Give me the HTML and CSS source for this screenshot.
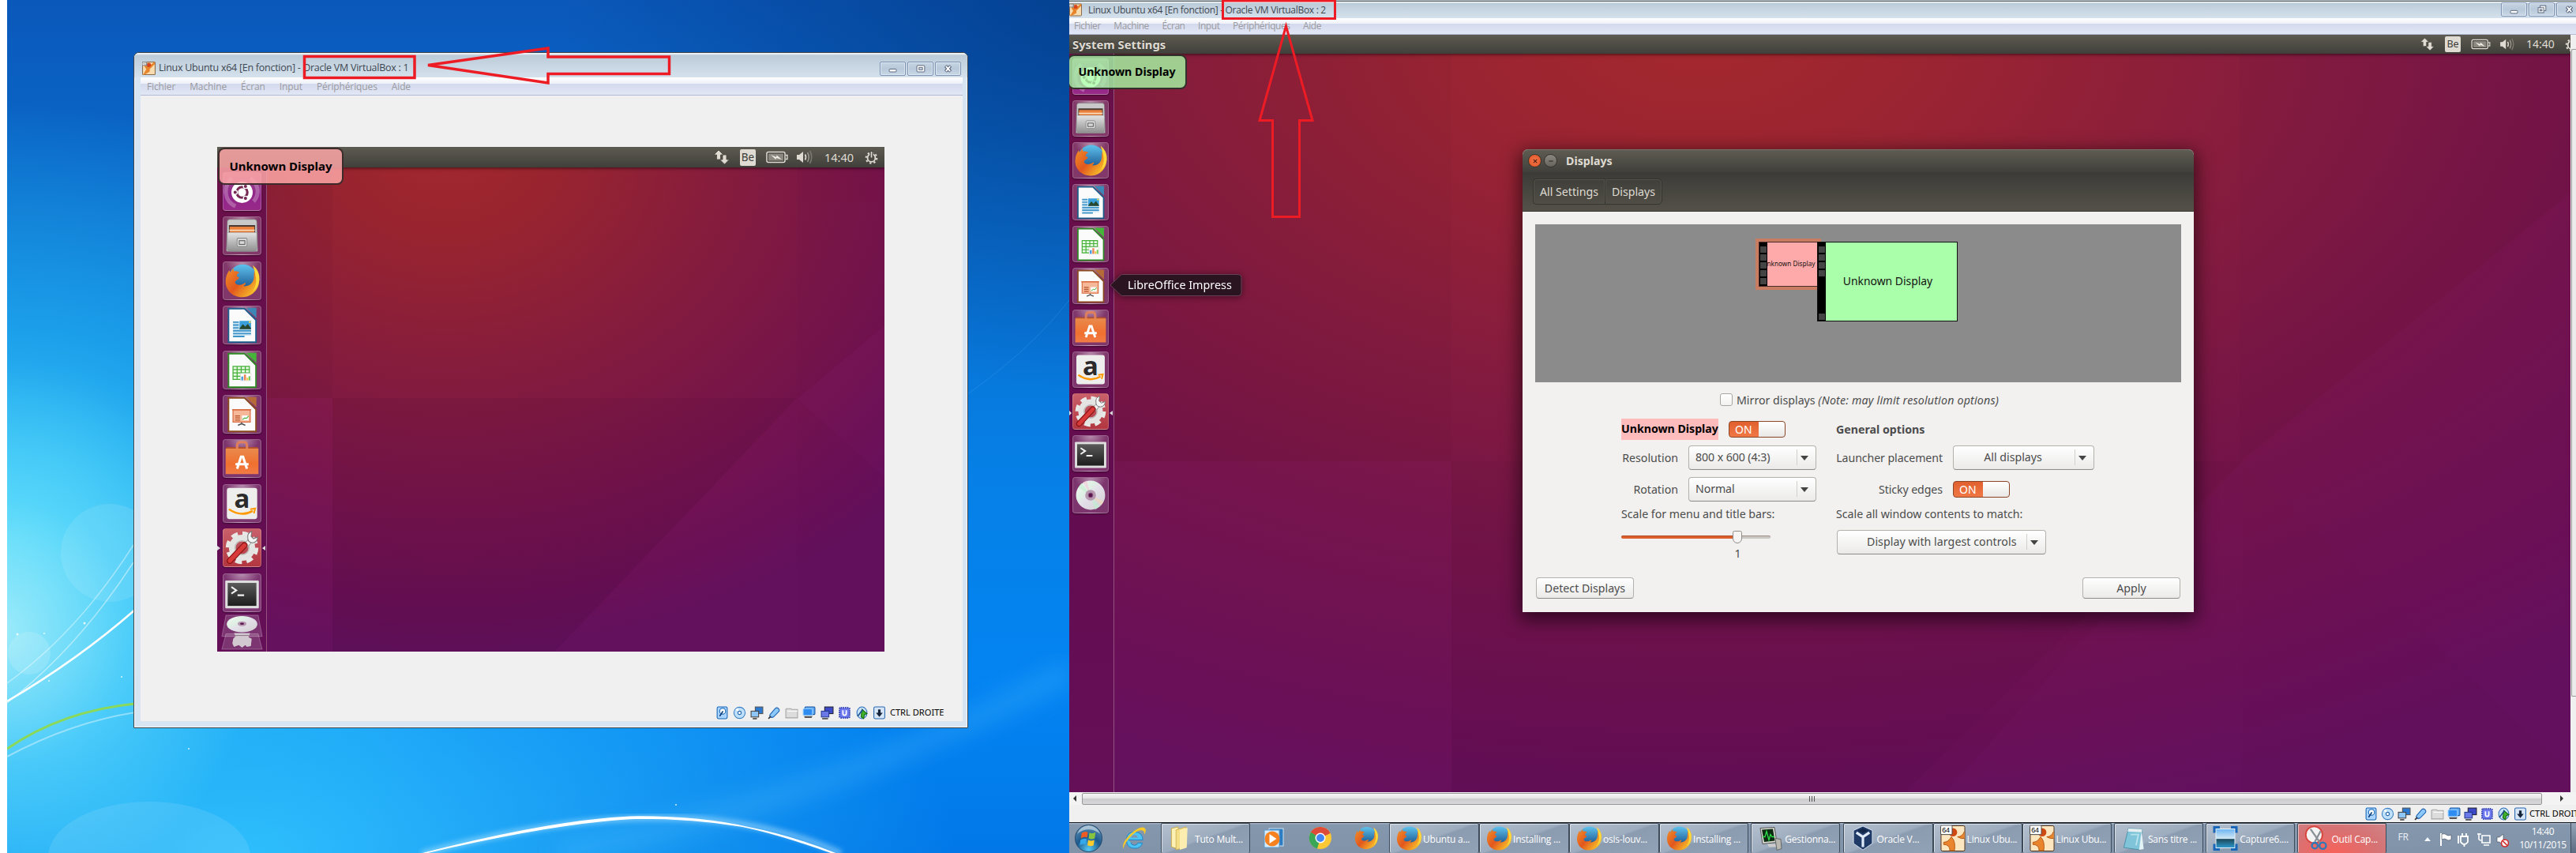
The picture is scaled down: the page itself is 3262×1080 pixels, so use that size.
FILE: index.html
```html
<!DOCTYPE html>
<html lang="fr">
<head>
<meta charset="utf-8">
<title>Linux Ubuntu x64 - Oracle VM VirtualBox</title>
<link rel="stylesheet" href="styles.css">
</head>
<body>
<svg class="defs" aria-hidden="true">
  <defs>
    <linearGradient id="gGrey" x1="0" y1="0" x2="0" y2="1"><stop offset="0" stop-color="#e4e4e4"/><stop offset="1" stop-color="#8f8f8f"/></linearGradient>
    <linearGradient id="gBlue" x1="0" y1="0" x2="0" y2="1"><stop offset="0" stop-color="#5fc3ee"/><stop offset="1" stop-color="#0c3f7c"/></linearGradient>
    <linearGradient id="gFox" x1="0" y1="0" x2="1" y2="0.7"><stop offset="0" stop-color="#f0902a"/><stop offset="0.5" stop-color="#e2571d"/><stop offset="1" stop-color="#f9c52c"/></linearGradient>
    <linearGradient id="gBag" x1="0" y1="0" x2="0" y2="1"><stop offset="0" stop-color="#e98a4c"/><stop offset="0.6" stop-color="#f0702f"/><stop offset="1" stop-color="#f07c45"/></linearGradient>
    <linearGradient id="gTerm" x1="0" y1="0" x2="0" y2="1"><stop offset="0" stop-color="#5a5a5a"/><stop offset="1" stop-color="#1d1d1d"/></linearGradient>
    <linearGradient id="gDisc" x1="0" y1="0" x2="1" y2="1"><stop offset="0" stop-color="#f6f6f6"/><stop offset="0.35" stop-color="#dff0e4"/><stop offset="0.5" stop-color="#e4e0ea"/><stop offset="1" stop-color="#cfcfcf"/></linearGradient>
    <radialGradient id="gOrb" cx="0.5" cy="0.9" r="0.9"><stop offset="0" stop-color="#56c8f2"/><stop offset="0.5" stop-color="#1c5b8f"/><stop offset="1" stop-color="#5c8db2"/></radialGradient>
    <linearGradient id="gCap" x1="0" y1="0" x2="0" y2="1"><stop offset="0" stop-color="#6ab4f2"/><stop offset="0.5" stop-color="#cfe6f4"/><stop offset="0.55" stop-color="#1c4a5c"/><stop offset="1" stop-color="#2e9bd0"/></linearGradient>
  </defs>

  <symbol id="i-ubuntu" viewBox="0 0 48 48">
    <path d="M12 8a20 20 0 0 0 4 34M38 36a18 18 0 0 0-4-28" fill="none" stroke="#fff" stroke-opacity=".25" stroke-width="5"/>
    <circle cx="24" cy="25" r="13" fill="#fff"/>
    <circle cx="24" cy="25" r="6.5" fill="none" stroke="#772953" stroke-width="3"/>
    <g fill="#772953" stroke="#fff" stroke-width="1.2"><circle cx="15.6" cy="25" r="2.6"/><circle cx="28.2" cy="17.7" r="2.6"/><circle cx="28.2" cy="32.3" r="2.6"/></g>
  </symbol>
  <symbol id="i-files" viewBox="0 0 48 48">
    <path d="M6 7q0-3 3-3h30q3 0 3 3l1 35q0 1-1 1H6q-1 0-1-1z" fill="#c9c9c9" stroke="#777" stroke-width=".6"/>
    <path d="M8 11h32v10H8z" fill="#4b3a33"/>
    <path d="M9 13h30v8H9z" fill="#e9803c"/><path d="M8.500 16.500h31v1.500h-31z" fill="#fbe3c8"/>
    <path d="M6 20h36v20q0 3-3 3H9q-3 0-3-3z" fill="url(#gGrey)" stroke="#8a8a8a" stroke-width=".5"/>
    <rect x="18" y="27" width="12" height="10" rx="1.500" fill="#e0e0e0" stroke="#8a8a8a"/><rect x="20.500" y="30" width="7" height="4.500" fill="#d8d8d8" stroke="#555"/>
  </symbol>
  <symbol id="i-firefox" viewBox="0 0 48 48">
    <circle cx="25" cy="22" r="18" fill="url(#gBlue)"/>
    <path d="M41 9q6 8 3.500 19C42 38 33 44 24 44 12 44 3.500 35 4 24c.2-6 2.500-10 4.500-13l1 3 4-5.500.5 4c3-1 5 0 7 1.500-2 1-3.500 2-3.500 4.500l3 1.500c0 3-5 3-5 6 1 4 8 4 12 .5 2 .5 0 3-2 4 7 1 13-4 13-11 0-4 0-7 2.500-10.500z" fill="url(#gFox)"/>
    <path d="M37 5q9 7 8 18-1 9-8 14 5-8 4-16-1-8-4-16z" fill="#fbd93a"/>
  </symbol>
  <symbol id="i-writer" viewBox="0 0 48 48">
    <path d="M7.500 4H27l14 14v27H7.500z" fill="#fbfbfb" stroke="#1d5f8c" stroke-width="1.800"/>
    <path d="M29 3h12.500v12.500z" fill="#3c87b5"/>
    <path d="M13 20h22v17H13z" fill="#d3e8f5"/>
    <path d="M13 20.500h7M13 24h7M13 27.500h7M13 31h22M13 34.500h22M13 38h14" stroke="#3e93c8" stroke-width="1.800"/>
    <path d="M21 19h14v10H21z" fill="#3aa0dc"/><path d="M21 28l4-5 3 3 3-3.500 4 5.500v1H21z" fill="#27472e"/><circle cx="33.500" cy="20.500" r="1.200" fill="#f6e04b"/>
  </symbol>
  <symbol id="i-calc" viewBox="0 0 48 48">
    <path d="M7.500 4H27l14 14v27H7.500z" fill="#fbfbfb" stroke="#2d8a24" stroke-width="1.800"/>
    <path d="M29 3h12.500v12.500z" fill="#45b53a"/>
    <path d="M13 19.500h20v16H13zM13 23.500h20M13 27.500h20M13 31.500h20M18 19.500v16M23 19.500v16M28 19.500v16" fill="#e8f8e5" stroke="#43b036" stroke-width="1.200"/>
    <path d="M22 28h13v9H22z" fill="#fff" stroke="#ccc" stroke-width=".5"/><path d="M23 32h2.500v4.500H23z" fill="#4b9ee0"/><path d="M26.300 29.500h2.500v7h-2.500z" fill="#e98557"/><path d="M29.500 33.500h2v3h-2z" fill="#f0c830"/><path d="M32 31.500h2v5h-2z" fill="#6cc95a"/>
  </symbol>
  <symbol id="i-impress" viewBox="0 0 48 48">
    <path d="M7.500 4H27l14 14v27H7.500z" fill="#fbfbfb" stroke="#8a4a1e" stroke-width="1.800"/>
    <path d="M29 3h12.500v12.500z" fill="#b56a38"/>
    <path d="M13 18.500h21v15H13z" fill="#f7b899" stroke="#d96c40" stroke-width="1.200"/><path d="M12 18.500h23" stroke="#d96c40" stroke-width="1.500"/>
    <path d="M15.500 26h6M15.500 28.500h6M15.500 31h6" stroke="#b5522a" stroke-width="1.200"/><path d="M24 25.500h8v6h-8z" fill="#fff"/><path d="M24.500 30.500l3-2 2 .5 2.500-3" fill="none" stroke="#43b036"/>
    <path d="M23.500 34v2M19 37.500l4.500-2 4.500 2" fill="none" stroke="#555" stroke-width="1.500"/>
  </symbol>
  <symbol id="i-bag" viewBox="0 0 48 48">
    <path d="M5 10h38l1 3H4z" fill="#b5502c"/>
    <path d="M18 15V8q0-4 4-4h4q4 0 4 4v7" fill="none" stroke="#e07f5c" stroke-width="3"/>
    <path d="M4 12h40v31H4z" fill="url(#gBag)"/>
    <path d="M18 36.500L22.800 22h2.400L30 36.500M16 31h16" fill="none" stroke="#fff" stroke-width="3"/>
  </symbol>
  <symbol id="i-amazon" viewBox="0 0 48 48">
    <rect x="5.500" y="5" width="37" height="38" rx="3" fill="#eeeeec"/>
    <path d="M8 31q15 10 29 2" fill="none" stroke="#f90" stroke-width="2.400"/><path d="M34 31l6-1-1.500 6" fill="none" stroke="#f90" stroke-width="2"/>
  </symbol>
  <symbol id="i-settings" viewBox="0 0 48 48">
    <circle cx="24" cy="24" r="17.500" fill="none" stroke="#e8e8e6" stroke-width="5" stroke-dasharray="8 5.740" />
    <circle cx="24" cy="24" r="12" fill="none" stroke="#e4e4e2" stroke-width="8"/>
    <circle cx="24" cy="24" r="8.500" fill="none" stroke="#b9b9b7" stroke-width="1.500"/>
    <path d="M28 22l8-9" stroke="#8a8a8a" stroke-width="6"/><path d="M28 22l8-9" stroke="#f4f4f4" stroke-width="4.500"/>
    <path d="M31 12q-1-6 5-8l-1 6 3 3 5-2q0 6-6 7-6 0-6-6z" fill="#f4f4f4" stroke="#777" stroke-width="1"/>
    <path d="M9 40L27 21" stroke="#8d1515" stroke-width="7.500" stroke-linecap="round"/><path d="M9 40L27 21" stroke="#d83a3a" stroke-width="5" stroke-linecap="round"/>
  </symbol>
  <symbol id="i-terminal" viewBox="0 0 48 48">
    <rect x="3.500" y="9" width="41" height="34" rx="1" fill="#dedede"/><rect x="6.500" y="12" width="35" height="28" fill="url(#gTerm)"/>
    <path d="M11 17l6 4-6 4M18.500 27h8" fill="none" stroke="#f2f2f2" stroke-width="2"/>
  </symbol>
  <symbol id="i-disc" viewBox="0 0 48 48">
    <circle cx="24" cy="24" r="19" fill="url(#gDisc)"/>
    <path d="M24 24L8 14l4-6z" fill="#bff0cf" opacity=".6"/><path d="M24 24L36 39l-6 4z" fill="#bdf0cf" opacity=".6"/><path d="M24 24l17 8-3 5z" fill="#f4d5b5" opacity=".6"/><path d="M24 24L14 7l5-2z" fill="#f4c8d8" opacity=".6"/>
    <circle cx="24" cy="24" r="7" fill="#b79ab0"/><circle cx="24" cy="24" r="3" fill="#5a1450" stroke="#8a5a80"/>
  </symbol>
  <symbol id="i-folded" viewBox="0 0 52 44" preserveAspectRatio="none">
    <path d="M6 1h40l5 26H1z" fill="#fff" fill-opacity=".16" stroke="#fff" stroke-opacity=".25"/>
    <path d="M6 24h40l5 19H1z" fill="#fff" fill-opacity=".16" stroke="#fff" stroke-opacity=".25"/>
    <ellipse cx="26" cy="12" rx="19" ry="10" fill="url(#gDisc)"/><ellipse cx="26" cy="11.500" rx="5.500" ry="3" fill="#b79ab0"/><ellipse cx="26" cy="11.500" rx="2.500" ry="1.300" fill="#5a1450"/>
    <path d="M16 23h20l-2 5 4 2-1 9-5 1-2-2-4 3-4-3-6 2-2-4 1-6 3-3z" fill="#d2c8d0"/><path d="M17 26h18" stroke="#8d7388"/>
  </symbol>

  <symbol id="t-net" viewBox="0 0 20 18"><path d="M6 0l6 6H8.500v6h-5V6H0z M13.500 18l-6-6H11V6h5v6h3.500z" fill="#dfdbd2" stroke="#4a483f" stroke-width=".8"/></symbol>
  <symbol id="t-bat" viewBox="0 0 28 16"><rect x="1" y="1.500" width="23" height="13" rx="2" fill="#3e3d38" stroke="#dfdbd2" stroke-width="1.500"/><path d="M25 5.500h2v5h-2" fill="none" stroke="#dfdbd2" stroke-width="1.300"/><rect x="3" y="3.500" width="19" height="9" fill="#8b897f"/><path d="M6 5l7 3 .5-2.500L20 11l-7-2-.5 2z" fill="#f1efe8"/></symbol>
  <symbol id="t-vol" viewBox="0 0 22 18"><path d="M1 6h3l5-4v14l-5-4H1z" fill="#dfdbd2"/><path d="M11.500 5.500q2 3.500 0 7" fill="none" stroke="#dfdbd2" stroke-width="1.600"/><path d="M14.500 3q3.500 6 0 12" fill="none" stroke="#97948a" stroke-width="1.600"/><path d="M17.500 1q4.500 8 0 16" fill="none" stroke="#7a776e" stroke-width="1.600"/></symbol>
  <symbol id="t-gear" viewBox="0 0 18 18"><circle cx="9" cy="9.500" r="5.200" fill="none" stroke="#dfdbd2" stroke-width="2"/><circle cx="9" cy="9.500" r="7.200" fill="none" stroke="#dfdbd2" stroke-width="2.200" stroke-dasharray="2.500 3.155"/><path d="M9 0v9" stroke="#45443e" stroke-width="4.500"/><path d="M9 1v8" stroke="#dfdbd2" stroke-width="1.800"/></symbol>

  <symbol id="s-hdd" viewBox="0 0 16 16"><rect x="2" y="1" width="12" height="14" rx="1.500" fill="#a9d4ff" stroke="#1565b5"/><circle cx="8.500" cy="6" r="3.500" fill="#fff" stroke="#1565b5"/><path d="M5 12l4-6" stroke="#123e7a" stroke-width="1.600"/></symbol>
  <symbol id="s-cd" viewBox="0 0 16 16"><circle cx="8" cy="8" r="6.700" fill="#bfe0fb" stroke="#3a7fc4"/><path d="M8 8L3 4l3-2z" fill="#fff"/><circle cx="8" cy="8" r="2" fill="#fff" stroke="#2a6ab0"/></symbol>
  <symbol id="s-net" viewBox="0 0 16 16"><rect x="6" y="1" width="9" height="8" fill="#2a78d0" stroke="#555"/><rect x="1" y="6" width="9" height="7" fill="#8ec6f8" stroke="#444"/><path d="M3 15h5" stroke="#444" stroke-width="1.500"/></symbol>
  <symbol id="s-usb" viewBox="0 0 16 16"><path d="M3 10l6-7q2-2 4 0 2 2 0 4l-6 6q-2 1-4 0-1-2 0-3z" fill="#8cc8fa" stroke="#1d62b0"/><path d="M1 15l3-3" stroke="#333" stroke-width="1.500"/></symbol>
  <symbol id="s-dir" viewBox="0 0 16 16"><path d="M1 4l1-1h5l1 1h7v10H1z" fill="#dcdcdc" stroke="#a5a5a5"/><path d="M3 6h12" stroke="#fff"/></symbol>
  <symbol id="s-scr" viewBox="0 0 16 16"><rect x="3" y="1" width="12" height="9" rx="1" fill="#5da9f5" stroke="#1b56a0"/><rect x="1" y="3" width="11" height="8" rx="1" fill="#2f8cf0" stroke="#9cd0ff"/><path d="M3 14h8l1-2H2z" fill="#555"/></symbol>
  <symbol id="s-rec" viewBox="0 0 16 16"><rect x="5" y="1" width="10" height="8" fill="#3c49c8" stroke="#223"/><rect x="1" y="6" width="9" height="7" fill="#6b78e8" stroke="#223a90"/><path d="M2 15h7" stroke="#444" stroke-width="1.500"/></symbol>
  <symbol id="s-cpu" viewBox="0 0 16 16"><rect x="2" y="2" width="12" height="12" rx="1.500" fill="#6f7cf0" stroke="#3a45b8" stroke-width="2" stroke-dasharray="1.500 1"/><path d="M6 5v4q0 2 2 2t2-2V5" fill="none" stroke="#fff" stroke-width="1.600"/></symbol>
  <symbol id="s-mouse" viewBox="0 0 16 16"><ellipse cx="8" cy="8" rx="6" ry="7" fill="#c6e2fa" stroke="#2c6db8"/><path d="M8 4l6 5-3 1-1 5-3-2z" fill="#43b52c" stroke="#17680f"/><path d="M3 12l6-8" stroke="#1b4e8a" stroke-width="1.500"/></symbol>
  <symbol id="s-host" viewBox="0 0 16 16"><rect x="1.500" y="1" width="13" height="14" rx="1.500" fill="#d6e6f6" stroke="#2866b0"/><path d="M6.500 4h3v4H12l-4 5-4-5h2.500z" fill="#16243a"/></symbol>

  <symbol id="w-vm" viewBox="0 0 16 16"><rect x=".5" y=".5" width="15" height="15" rx="1" fill="#f6dcae" stroke="#8a6a4a"/><path d="M4 0q1 6 5 5l6-5v3L9 9v3l-7 4H1l4-7q-3-3-3-9z" fill="#e8842a"/><circle cx="8" cy="4" r="2.600" fill="#d8441c"/><rect x="0" y="0" width="6" height="5" fill="#8b8b88"/><path d="M1 1.500h2v2H1zM4 1v3" stroke="#fff" stroke-width=".8" fill="none"/></symbol>
  <symbol id="w-vm-l" viewBox="0 0 32 34"><rect x=".5" y=".5" width="31" height="33" rx="2" fill="#fbe6bf" stroke="#4f2f16"/><path d="M14 15q6 6 4 18h-6q0-8-8-8v-3q6 0 10-7zM31 8q-3 7-9 7 5 3 9 2" fill="#e9852c" stroke="#b55912"/><circle cx="16" cy="9" r="5.500" fill="#cf4a12"/><rect x="0" y="0" width="15" height="12" rx="1.500" fill="#fff" stroke="#444"/></symbol>

  <symbol id="b-start" viewBox="0 0 38 38"><circle cx="19" cy="19" r="17.500" fill="url(#gOrb)" stroke="#24496b"/><path d="M4 13Q19 2 34 13 30 3 19 2 8 3 4 13z" fill="#fff" opacity=".5"/><path d="M10 12q4-3 8-1l-1 7q-4-2-8 1z" fill="#ee5a24"/><path d="M20 11.500q4 2 8-.5l-1 8q-4 2-8 0z" fill="#86c440"/><path d="M8.500 21q4-3 8-1l-1 7q-4-2-8 1z" fill="#35a8ea"/><path d="M18.500 21q4 2 8 0l-1 7q-4 2-8 0z" fill="#fccb2c"/></symbol>
  <symbol id="b-ie" viewBox="0 0 34 34"><path d="M9 19h19q0-10-11-10.500Q7 9 6.500 19 7 30 17.500 30q8 0 10-7h-6q-1 3-4.500 3-4 0-4.500-3.500" fill="#4cc3f2" stroke="#1e86c6"/><path d="M12.500 16q1-3.500 4.500-3.500T21.500 16z" fill="#8094ab"/><path d="M3 31Q-1 24 12 11 26-1 31 4q2 3-1 8 0-6-5-5.500Q19 7 10 17 2 27 3 31z" fill="#f7c928"/></symbol>
  <symbol id="b-folder" viewBox="0 0 30 34"><path d="M3 4l9-2v29l-9-3z" fill="#fdf2b4" stroke="#c9a94a"/><path d="M9 6l13-4v26l-13 4z" fill="#f5df86" stroke="#c9a94a" stroke-width=".8"/><path d="M14 6l10-3-1 26-9 3z" fill="#fbeeb0"/></symbol>
  <symbol id="b-wmp" viewBox="0 0 30 30"><rect x="9" y="3" width="18" height="22" fill="#2b7cc0" stroke="#cfe5f6"/><rect x="3" y="5" width="19" height="22" fill="#d9ebf8" stroke="#5b9cd0"/><circle cx="13" cy="16" r="9.500" fill="#f5821e"/><path d="M9.500 10v12l9-6z" fill="#fff"/></symbol>
  <symbol id="b-chrome" viewBox="0 0 30 30"><circle cx="15" cy="15" r="14" fill="#fcc934"/><path d="M15 15L3 7.500A14 14 0 0 1 27.500 9z" fill="#dd4b3a"/><path d="M15 15l-4 13.500A14 14 0 0 1 3 7.500z" fill="#3aa757"/><path d="M15 15L3 7.500 15 4z" fill="#dd4b3a"/><circle cx="15" cy="15" r="6.500" fill="#fff"/><circle cx="15" cy="15" r="5" fill="#4285f4"/></symbol>
  <symbol id="b-perf" viewBox="0 0 32 32"><path d="M3 3l18-1 3 19-18 2z" fill="#d8d8d0" stroke="#555"/><path d="M5 5l14-1 2.500 15L8 20.500z" fill="#0d2a12"/><path d="M6 14h3l2-7 3 11 2-7 2 3h3" fill="none" stroke="#2de04a" stroke-width="1.300"/><path d="M12 23h10l2 4H14z" fill="#ccc"/><path d="M22 16l7 1 1 12-6 2z" fill="#b9b9b2" stroke="#666"/></symbol>
  <symbol id="b-vbox" viewBox="0 0 32 36"><path d="M16 1l13 6v18L16 34 3 25V7z" fill="#1f3a66" stroke="#dfe8f5" stroke-width="1"/><path d="M16 16v14M16 16L7 10M16 16l9-6" stroke="#dfeaf8" stroke-width="3.500" fill="none"/><path d="M9 7l7-3 7 3-7 4z" fill="#132848"/></symbol>
  <symbol id="b-note" viewBox="0 0 32 34"><path d="M9 4l18 1-3 27L3 29z" fill="#7fc4d8" stroke="#4b91a8"/><path d="M9 4l18 1-.5 4L8 8z" fill="#e6eef0"/><path d="M26 7l3 24-6 1z" fill="#e3f3f6"/><path d="M12 12l10 0-3 14" fill="none" stroke="#b5e2ec" stroke-width="2"/></symbol>
  <symbol id="b-capt" viewBox="0 0 32 32"><rect x="4" y="4" width="24" height="24" fill="url(#gCap)" stroke="#e8f3fa"/><path d="M2 9V2h7M23 2h7v7M30 23v7h-7M9 30H2v-7" fill="none" stroke="#1a66b8" stroke-width="3"/></symbol>
  <symbol id="b-snip" viewBox="0 0 34 36"><circle cx="13" cy="13" r="11.500" fill="#f3f3f3" stroke="#d8433c" stroke-width="2"/><path d="M8 5l14 20M22 8L14 23" stroke="#8a9098" stroke-width="2.500"/><circle cx="14" cy="28" r="4" fill="none" stroke="#2d78b8" stroke-width="2.500"/><circle cx="25" cy="28" r="4.500" fill="none" stroke="#2d78b8" stroke-width="2.500"/></symbol>
</svg>

<main class="screens">
  <section class="desktop">
    <svg class="aurora" viewBox="0 0 1345 1080">
      <defs><filter id="soft"><feGaussianBlur stdDeviation="14"/></filter><filter id="glow"><feGaussianBlur stdDeviation="3"/></filter></defs>
      <ellipse cx="180" cy="1085" rx="128" ry="70" fill="#fff" opacity=".1"/>
      <circle cx="130" cy="700" r="62" fill="#fff" opacity=".1"/>
      <circle cx="28" cy="827" r="27" fill="#fff" opacity=".14"/>
      <path d="M700 1080Q1050 1010 1345 850" fill="none" stroke="#5cc8ff" stroke-opacity=".25" stroke-width="26" filter="url(#soft)"/>
      <path d="M1200 510Q1290 450 1345 380" fill="none" stroke="#6ac0ff" stroke-opacity=".2"/>
      <path d="M0 948Q70 900 162 891" fill="none" stroke="#8ad95a" stroke-width="3"/>
      <path d="M0 865Q90 800 160 690" fill="none" stroke="#fff" stroke-opacity=".4" stroke-width="1.500"/>
      <path d="M0 890Q90 820 160 712" fill="none" stroke="#fff" stroke-opacity=".45" stroke-width="1.500"/>
      <path d="M0 888Q90 835 162 772" fill="none" stroke="#fff" stroke-width="2.500"/>
      <path d="M0 958Q80 915 162 902" fill="none" stroke="#fff" stroke-opacity=".4" stroke-width="2"/>
      <path d="M525 1081Q860 990 1056 1081" fill="none" stroke="#bfeaff" stroke-width="8" opacity=".5" filter="url(#glow)"/>
      <path d="M525 1081Q700 1036 800 1034 880 1034 940 1048 1000 1060 1062 1086 980 1056 930 1046 870 1036 800 1036 700 1040 525 1081z" fill="#fff" stroke="#fff" stroke-width="1.500"/>
      <g fill="#fff" opacity=".8"><circle cx="13" cy="803" r="1.500"/><circle cx="98" cy="789" r="1.500"/><circle cx="53" cy="862" r="1"/><circle cx="145" cy="857" r="1"/><circle cx="47" cy="802" r="1"/><circle cx="230" cy="948" r="1"/><circle cx="847" cy="1019" r="1"/></g>
    </svg>

    <article class="window">
      <header class="win-title">
        <svg class="ico"><use href="#w-vm"/></svg>
        <h1>Linux Ubuntu x64 [En fonction] - Oracle VM VirtualBox : 1</h1>
        <div class="win-buttons">
          <span><svg viewBox="0 0 33 18"><rect x="11.500" y="9.500" width="10" height="4" rx="1" fill="#fff" stroke="#4d5a73"/></svg></span>
          <span><svg viewBox="0 0 33 18"><rect x="11.500" y="4.500" width="11" height="9" rx="1" fill="#fff" stroke="#4d5a73"/><rect x="14.500" y="7.500" width="5" height="3" fill="#cfdbe9" stroke="#4d5a73"/></svg></span>
          <span><svg viewBox="0 0 33 18"><path d="M13 5l7 8M20 5l-7 8" stroke="#4d5a73" stroke-width="4.500"/><path d="M13.500 5.500l6 7M19.500 5.500l-6 7" stroke="#fff" stroke-width="2.200"/></svg></span>
        </div>
      </header>
      <nav class="win-menu"><span>Fichier</span><span>Machine</span><span>Écran</span><span>Input</span><span>Périphériques</span><span>Aide</span></nav>
      <div class="client">
        <div class="guest">
          <svg class="facets" viewBox="0 0 845 639" preserveAspectRatio="none">
            <path d="M0 26h146v292H0z" fill="#300828" opacity=".1"/><path d="M0 318h146v321H0z" fill="#8a1f88" opacity=".2"/>
            <path d="M146 318h588L427 639H146z" fill="#200028" opacity=".12"/>
            <path d="M734 319L427 639h307z" fill="#8a1f88" opacity=".13"/><path d="M734 26h111v200L734 319z" fill="#500848" opacity=".12"/>
            <path d="M734 319l111-93v192z" fill="#8a1f88" opacity=".2"/><path d="M734 319l111 99v221H734z" fill="#8a1f88" opacity=".07"/>
          </svg>
          <header class="panel">
            <div class="tray"><svg class="t-net"><use href="#t-net"/></svg><b>Be</b><svg class="t-bat"><use href="#t-bat"/></svg><svg class="t-vol"><use href="#t-vol"/></svg><time>14:40</time><svg class="t-gear"><use href="#t-gear"/></svg></div>
          </header>
          <aside class="launcher">
            <i class="dash"><svg><use href="#i-ubuntu"/></svg></i>
            <i><svg><use href="#i-files"/></svg></i>
            <i><svg><use href="#i-firefox"/></svg></i>
            <i><svg><use href="#i-writer"/></svg></i>
            <i><svg><use href="#i-calc"/></svg></i>
            <i><svg><use href="#i-impress"/></svg></i>
            <i><svg><use href="#i-bag"/></svg></i>
            <i><svg><use href="#i-amazon"/></svg><em>a</em></i>
            <i class="active"><svg><use href="#i-settings"/></svg></i>
            <i><svg><use href="#i-terminal"/></svg></i>
            <svg class="folded"><use href="#i-folded"/></svg>
          </aside>
          <div class="monitor-tag pink">Unknown Display</div>
        </div>
        <footer class="status">
          <svg><use href="#s-hdd"/></svg><svg><use href="#s-cd"/></svg><svg><use href="#s-net"/></svg><svg><use href="#s-usb"/></svg><svg><use href="#s-dir"/></svg><svg><use href="#s-scr"/></svg><svg><use href="#s-rec"/></svg><svg><use href="#s-cpu"/></svg><svg><use href="#s-mouse"/></svg><svg><use href="#s-host"/></svg>
          <span>CTRL DROITE</span>
        </footer>
      </div>
    </article>
  </section>

  <section class="second">
    <header class="win-title max">
      <svg class="ico"><use href="#w-vm"/></svg>
      <h1>Linux Ubuntu x64 [En fonction] - Oracle VM VirtualBox : 2</h1>
      <div class="win-buttons">
        <span><svg viewBox="0 0 33 18"><rect x="11.500" y="10.500" width="10" height="4" rx="1" fill="#fff" stroke="#4d5a73"/></svg></span>
        <span><svg viewBox="0 0 33 18"><rect x="14.500" y="3.500" width="8" height="7" fill="#fff" stroke="#4d5a73"/><rect x="11.500" y="6.500" width="8" height="7" fill="#fff" stroke="#4d5a73"/><rect x="14" y="9" width="3" height="2" fill="none" stroke="#4d5a73"/></svg></span>
        <span><svg viewBox="0 0 33 18"><path d="M13 5l7 8M20 5l-7 8" stroke="#4d5a73" stroke-width="4.500"/><path d="M13.500 5.500l6 7M19.500 5.500l-6 7" stroke="#fff" stroke-width="2.200"/></svg></span>
      </div>
    </header>
    <nav class="win-menu max"><span>Fichier</span><span>Machine</span><span>Écran</span><span>Input</span><span>Périphériques</span><span>Aide</span></nav>

    <div class="view">
      <div class="guest big">
        <svg class="facets" viewBox="0 0 1901 959" preserveAspectRatio="none">
          <path d="M0 24h484v516H0z" fill="#300828" opacity=".08"/><path d="M0 540h484v419H0z" fill="#8a1f88" opacity=".16"/>
          <path d="M484 540h1001L1059 959H484z" fill="#200028" opacity=".08"/>
          <path d="M1485 540L1110 959h375z" fill="#8a1f88" opacity=".12"/><path d="M1482 24h419v176L1482 540z" fill="#500848" opacity=".1"/>
          <path d="M1485 540l416-340v734z" fill="#8a1f88" opacity=".14"/><path d="M1485 540l416 394v25h-416z" fill="#8a1f88" opacity=".07"/>
        </svg>
        <header class="panel">
          <strong>System Settings</strong>
          <div class="tray"><svg class="t-net"><use href="#t-net"/></svg><b>Be</b><svg class="t-bat"><use href="#t-bat"/></svg><svg class="t-vol"><use href="#t-vol"/></svg><time>14:40</time><svg class="t-gear"><use href="#t-gear"/></svg></div>
        </header>
        <aside class="launcher">
          <i class="dash"><svg><use href="#i-ubuntu"/></svg></i>
          <i><svg><use href="#i-files"/></svg></i>
          <i><svg><use href="#i-firefox"/></svg></i>
          <i><svg><use href="#i-writer"/></svg></i>
          <i><svg><use href="#i-calc"/></svg></i>
          <i><svg><use href="#i-impress"/></svg></i>
          <i><svg><use href="#i-bag"/></svg></i>
          <i><svg><use href="#i-amazon"/></svg><em>a</em></i>
          <i class="active"><svg><use href="#i-settings"/></svg></i>
          <i><svg><use href="#i-terminal"/></svg></i>
          <i><svg><use href="#i-disc"/></svg></i>
        </aside>
        <div class="monitor-tag green">Unknown Display</div>
        <div class="tooltip"><svg viewBox="0 0 168 28"><path d="M1 14L14 1.500Q15 .5 17 .5h146q4 0 4 4v19q0 4-4 4H17q-2 0-3-1z" fill="#2a1420" stroke="#6a4058"/></svg><span>LibreOffice Impress</span></div>

        <article class="dialog">
          <header class="dlg-title"><span class="close"><svg viewBox="0 0 16 16"><path d="M5.500 5.500l5 5M10.500 5.500l-5 5" stroke="#4b1d0d" stroke-width="1.300"/></svg></span><span class="min"><svg viewBox="0 0 16 16"><path d="M5 8h6" stroke="#33322e" stroke-width="1.400"/></svg></span><h2>Displays</h2></header>
          <nav class="dlg-bar"><span>All Settings</span><span>Displays</span></nav>
          <div class="dlg-body">
            <div class="arrange">
              <div class="mon small"><div class="dock"><u></u><u></u><u></u><u></u><u></u></div><span>Unknown Display</span></div>
              <div class="mon large"><div class="dock"><u></u><u></u><u></u><u></u><u class="last"></u></div><span>Unknown Display</span></div>
            </div>
            <label class="mirror"><span class="check"></span>Mirror displays&nbsp;<em>(Note: may limit resolution options)</em></label>
            <div class="form">
              <div class="col left">
                <div class="row head"><strong class="marked">Unknown Display</strong><span class="switch">ON</span></div>
                <div class="row"><span class="lab">Resolution</span><span class="combo w162"><span>800 x 600 (4:3)</span></span></div>
                <div class="row rot"><span class="lab">Rotation</span><span class="combo w162"><span>Normal</span></span></div>
                <p>Scale for menu and title bars:</p>
                <div class="slider"><div class="knob"></div></div>
                <output>1</output>
              </div>
              <div class="col right">
                <div class="row head"><strong>General options</strong></div>
                <div class="row"><span class="lab">Launcher placement</span><span class="combo mid w179"><span>All displays</span></span></div>
                <div class="row rot"><span class="lab">Sticky edges</span><span class="switch">ON</span></div>
                <p>Scale all window contents to match:</p>
                <div class="row big-combo"><span class="combo mid w265"><span>Display with largest controls</span></span></div>
              </div>
            </div>
            <footer class="dlg-foot"><span class="btn">Detect Displays</span><span class="btn">Apply</span></footer>
          </div>
        </article>
      </div>
      <div class="vscroll"><div></div></div>
    </div>
    <div class="hscroll"><b class="la"></b><div class="thumb"><s></s></div><b class="ra"></b></div>
    <footer class="status wide">
      <svg><use href="#s-hdd"/></svg><svg><use href="#s-cd"/></svg><svg><use href="#s-net"/></svg><svg><use href="#s-usb"/></svg><svg><use href="#s-dir"/></svg><svg><use href="#s-scr"/></svg><svg><use href="#s-rec"/></svg><svg><use href="#s-cpu"/></svg><svg><use href="#s-mouse"/></svg><svg><use href="#s-host"/></svg>
      <span>CTRL DROITE</span>
    </footer>

    <footer class="taskbar">
      <span class="pin start"><svg><use href="#b-start"/></svg></span>
      <span class="pin ie"><svg><use href="#b-ie"/></svg></span>
      <span class="task"><svg><use href="#b-folder"/></svg>Tuto Mult...</span>
      <span class="pin wmp"><svg><use href="#b-wmp"/></svg></span>
      <span class="pin"><svg><use href="#b-chrome"/></svg></span>
      <span class="pin fox"><svg><use href="#i-firefox"/></svg></span>
      <span class="task j fox"><svg><use href="#i-firefox"/></svg>Ubuntu a...</span>
      <span class="task j fox"><svg><use href="#i-firefox"/></svg>Installing ...</span>
      <span class="task j fox"><svg><use href="#i-firefox"/></svg>osis-louv...</span>
      <span class="task g fox"><svg><use href="#i-firefox"/></svg>Installing ...</span>
      <span class="task g"><svg><use href="#b-perf"/></svg>Gestionna...</span>
      <span class="task j"><svg><use href="#b-vbox"/></svg>Oracle V...</span>
      <span class="task vm"><svg><use href="#w-vm-l"/></svg><small>64</small>Linux Ubu...</span>
      <span class="task vm g"><svg><use href="#w-vm-l"/></svg><small>64</small>Linux Ubu...</span>
      <span class="task g"><svg><use href="#b-note"/></svg>Sans titre ...</span>
      <span class="task g"><svg><use href="#b-capt"/></svg>Capture6....</span>
      <span class="task alert"><svg><use href="#b-snip"/></svg>Outil Cap...</span>
      <span class="lang">FR</span>
      <svg class="sys" viewBox="0 0 110 24">
        <path d="M3 15l4-5 4 5z" fill="#f4f7fa"/>
        <path d="M24 5v16" stroke="#fff" stroke-width="2"/><path d="M25 6q4-1 6 1t6 0v6q-4 2-6 0t-6 0z" fill="#fff" stroke="#3c4856" stroke-width=".6"/>
        <path d="M49 9h9v7q-2 3-4.500 3T49 16zM51 9V5M56 9V5M53.500 19v3M46 8v10" fill="none" stroke="#fff" stroke-width="1.800"/>
        <path d="M76 8h10v9H76zM78 20h7M72 5v7q0 2 3 2M70 6h5" fill="none" stroke="#fff" stroke-width="1.600"/>
        <path d="M95 10h3l5-4v14l-5-4h-3z" fill="#fff" stroke="#3c4856" stroke-width=".6"/><circle cx="105" cy="17.500" r="4.500" fill="#f4f4f4" stroke="#d52b2b" stroke-width="1.600"/><path d="M102 14.500l6 6" stroke="#d52b2b" stroke-width="1.600"/>
      </svg>
      <time class="clock"><span>14:40</span><span>10/11/2015</span></time>
      <span class="peek"></span>
    </footer>
  </section>

  <svg class="marks" viewBox="0 0 3262 1080">
    <g fill="none" stroke="#ed1c24" stroke-width="3.500">
      <rect x="385.500" y="71.500" width="139.500" height="27"/>
      <path d="M542 82.500L694 61v11h153.500v21.500H694V105z"/>
      <rect x="1548.500" y="1" width="142" height="22.500" stroke-width="3"/>
      <path d="M1628.500 33L1595 152.500h16.500v122h34v-122h16.500z" stroke-width="3"/>
    </g>
  </svg>
</main>
</body>
</html>
```
FILE: styles.css
```css
* { box-sizing: border-box; }
body { margin: 0; background: #fff; overflow: hidden; font-family: "Noto Sans", sans-serif; }
h1, h2, p { margin: 0; font-weight: 400; }
svg { display: block; }
.defs { position: absolute; width: 0; height: 0; }

.screens { position: relative; display: flex; width: 3262px; height: 1080px; padding-left: 9px; }
.marks { position: absolute; inset: 0; width: 3262px; height: 1080px; }

/* Windows 7 desktop */
.desktop {
  position: relative; flex: none; width: 1345px; height: 1080px; overflow: hidden;
  background:
    radial-gradient(ellipse 330px 340px at -10px 800px, rgba(175,242,250,.85), rgba(110,225,252,.5) 50%, rgba(60,195,250,0)),
    radial-gradient(ellipse 620px 560px at 0 690px, rgba(70,215,250,.95), rgba(40,185,245,.6) 50%, rgba(20,140,230,0)),
    radial-gradient(ellipse 900px 460px at 300px 1080px, rgba(50,195,255,.95), rgba(20,160,250,0)),
    radial-gradient(ellipse 700px 500px at 1400px 0, rgba(0,50,120,.65), rgba(0,60,150,0)),
    linear-gradient(#0a58ba 0, #0a6ccc 25%, #0680e6 55%, #0384f2 80%, #0278e8 100%);
}
.aurora { position: absolute; inset: 0; width: 1345px; height: 1080px; }

.window {
  position: absolute; left: 160px; top: 66px; width: 1057px; height: 856px; overflow: hidden;
  padding: 0 6px 8px 8px; background: #d7e4f2; border: 1px solid #3f4347; border-radius: 7px 7px 1px 1px;
  box-shadow: inset 0 0 0 1px #f3f8fc;
}
.win-title {
  display: flex; align-items: center; height: 31px; margin: 0 -6px 0 -8px; padding: 0 9px 0 10px;
  background: linear-gradient(#f0f5f9 0 1px, #bccbd8 3px, #d5e2ee);
  color: #3c4650; font-family: "Open Sans", sans-serif;
}
.win-title h1 { flex: 1; font-size: 12.5px; line-height: 20px; letter-spacing: -.26px; white-space: nowrap; }
.ico { width: 17px; height: 17px; margin-right: 4px; }
.win-buttons { display: flex; gap: 2px; }
.win-buttons span { width: 33px; height: 18px; border: 1px solid #8093b3; border-radius: 2px; box-shadow: inset 0 0 0 1px #dce7f1; background: linear-gradient(#c6d4e2, #b9c9da 50%, #c9d8e6); }
.win-buttons svg { width: 31px; height: 16px; }
.window .win-buttons { margin: 8px -1px 0 0; }
.window .win-title h1, .window .ico { margin-top: 7px; }
.win-menu {
  display: flex; gap: 18px; height: 23px; padding-left: 8px; line-height: 23px;
  font-family: "Open Sans", sans-serif; font-size: 12px; letter-spacing: -.12px; color: #9a9a9e;
  background: linear-gradient(#fff, #eef1f8 33%, #d4daed 35%, #e2e7f6 95%, #b3bbd4 96%);
}
.client { display: flex; flex-direction: column; height: 792px; padding: 65px 0 0 97px; background: #f0f0f0; }

.win-title.max { height: 23px; margin: 0; padding: 2px 0 0; background: linear-gradient(#55605c 0 1px, #f0f5f9 1px 2px, #bccbd8 3px, #d5e2ee); border-top: 1px solid #b9c2c8; }
.max .ico { margin: -1px 8px 0 0; width: 16px; }
.win-title.max h1 { font-size: 12px; letter-spacing: -.3px; }
.max .win-buttons { margin: -2px -8px 0 0; }
.win-menu.max { height: 21px; gap: 16.500px; padding-left: 6px; line-height: 19px; letter-spacing: -.45px; }

/* Ubuntu guest */
.guest {
  position: relative; flex: none; width: 845px; height: 639px; overflow: hidden;
  background: radial-gradient(ellipse 800px 640px at 290px 0, #a3282e 0, #98242f 18%, #871d3c 42%, #771549 68%, #680f54 90%, #61105a 100%);
}
.guest.big { width: 1901px; height: 959px; background: radial-gradient(ellipse 1750px 1020px at 800px 0, #a4282d 0, #9a2432 18%, #861c3e 42%, #741448 64%, #680f54 88%, #61105b 100%); }
.facets { position: absolute; inset: 0; width: 100%; height: 100%; opacity: .5; }
.panel {
  position: relative; display: flex; align-items: center; height: 26px; padding-right: 8px;
  background: linear-gradient(#5d5b51, #403f3a); box-shadow: 0 1px 4px rgba(0,0,0,.6); color: #dfdbd2;
}
.panel strong { padding-left: 4px; font-size: 14.8px; line-height: 24px; text-shadow: 0 -1px #33322d; }
.tray { display: flex; align-items: center; margin-left: auto; }
.tray time { font-size: 14.5px; line-height: 20px; width: 38px; margin: 0 13px 0 14px; }
.tray b { width: 20px; height: 21px; margin: 0 13px; background: #dfdbd2; border-radius: 2px; color: #3c3b37; font: 13.5px/21px "Noto Sans", sans-serif; text-align: center; }
.t-net { width: 20px; height: 18px; } .t-bat { width: 28px; height: 16px; } .t-vol { width: 22px; height: 18px; margin-left: 10px; } .t-gear { width: 17px; height: 17px; }
.big .panel { height: 24px; padding-right: 0; }
.big .tray { margin-right: -10px; }
.big .t-bat { width: 25px; height: 14px; } .big .t-vol { width: 20px; height: 16px; margin-left: 11px; } .big .t-net { width: 18px; height: 16px; }
.big .tray b { height: 20px; font-size: 12.5px; line-height: 20px; margin: 0 13px; }
.big .tray time { margin: 0 11px 0 14px; font-size: 14px; }

.launcher {
  position: relative; display: flex; flex-direction: column; gap: 7.4px; width: 63px; height: 613px; padding: 6px 0 0 7px;
  background: linear-gradient(#6a1048, #630c50 60%, #650f58); border-right: 1px solid #94527f;
}
.launcher i {
  position: relative; flex: none; width: 49px; height: 49px; border-radius: 4px; font-style: normal;
  background: radial-gradient(ellipse 60% 45% at 50% 0, rgba(255,255,255,.5), rgba(255,255,255,.12) 75%), rgba(255,255,255,.06);
  border: 1px solid rgba(255,255,255,.22); box-shadow: 0 1px 2px rgba(0,0,0,.4);
}
.launcher i.dash { background: linear-gradient(#a0508c, #90248a 60%, #982a88); }
.launcher i.active { background: linear-gradient(#c9606a, #b23640); }
.launcher i.active::before, .launcher i.active::after { content: ""; position: absolute; top: 21px; border: 3px solid transparent; }
.launcher i.active::before { left: -8px; border-left: 4px solid #ddd; }
.launcher i.active::after { right: -6px; border-right: 4px solid #ddd; }
.launcher svg { width: 100%; height: 100%; }
.launcher i svg { transform: scale(1.06); }
.launcher em { position: absolute; left: 0; right: 0; top: 1px; text-align: center; font: bold 33px/32px "Noto Sans", sans-serif; color: #2b2b2b; }
.launcher .folded { flex: none; width: 53px; height: 45px; margin: -4px 0 0 -2px; }
.big .launcher { gap: 7px; width: 57px; height: 935px; padding: 6px 0 0 4px; }
.big .launcher i { width: 46px; height: 46px; }
.big .launcher i.active::before { left: -5px; border-left-width: 3px; border-right: 0; }

.monitor-tag {
  position: absolute; left: 1px; top: 1px; width: 159px; height: 47px; border: 2px solid rgba(30,25,25,.85); border-radius: 8px;
  font-weight: 700; font-size: 15px; line-height: 43px; text-align: center; color: #000;
}
.pink { background: rgba(255,168,168,.84); }
.green { left: -2px; top: 25px; width: 151px; height: 44px; line-height: 39px; font-size: 14.2px; background: rgba(168,255,168,.78); padding-right: 1px; }
.tooltip { position: absolute; left: 51px; top: 303px; width: 168px; height: 28px; filter: drop-shadow(0 1px 4px rgba(0,0,0,.5)); }
.tooltip svg { width: 168px; height: 28px; }
.tooltip span { position: absolute; left: 23px; top: 0; font-size: 14.35px; line-height: 27px; color: #fff; white-space: nowrap; }

/* Displays dialog */
.dialog {
  position: absolute; left: 574px; top: 145px; width: 850px; height: 586px; display: flex; flex-direction: column;
  background: #f2f1f0; border-radius: 7px 7px 0 0; box-shadow: 0 6px 22px 4px rgba(0,0,0,.55); font-size: 14.2px; color: #4c4c4c;
}
.dlg-title { display: flex; align-items: center; height: 29px; padding-left: 7px; gap: 3px; background: linear-gradient(#5f5d53, #403f3a); border-radius: 7px 7px 0 0; color: #dfdbd2; box-shadow: inset 0 1px #75736a; }
.dlg-title span { width: 17px; height: 17px; padding: .5px; border-radius: 50%; background: radial-gradient(#f4794e, #df4f20); border: 1px solid #34332e; }
.dlg-title span.min { background: linear-gradient(#8a887f, #65635b); }
.dlg-title svg { width: 14px; height: 14px; }
.dlg-title h2 { margin-left: 8px; font-size: 14.2px; font-weight: 700; }
.dlg-bar { display: flex; align-items: center; height: 50px; padding-left: 13px; background: linear-gradient(#3c3b37, #535148); border-bottom: 1px solid #36352f; color: #dfdbd2; }
.dlg-bar span { height: 33px; line-height: 31px; text-align: center; border: 1px solid #34332e; box-shadow: inset 0 0 0 1px #54534b; }
.dlg-bar span:first-child { width: 91px; border-radius: 5px 0 0 5px; border-right: 0; }
.dlg-bar span:last-child { width: 73px; border-radius: 0 5px 5px 0; }
.dlg-body { flex: 1; display: flex; flex-direction: column; padding: 16px 16px 17px; }
.arrange { position: relative; height: 200px; background: #8b8b8b; }
.mon { position: absolute; display: flex; border: 1px solid #111; color: #111; }
.mon span { flex: 1; display: flex; align-items: center; justify-content: center; white-space: nowrap; }
.mon.small { left: 283px; top: 22px; width: 75px; height: 57px; background: #ffaaaa; outline: 4px solid #c87c62; font-size: 8.2px; border-color: #4b2a2a; }
.mon.small span { padding-bottom: 2px; margin-left: -9px; }
.mon.small .dock { position: relative; z-index: 1; }
.mon.large { left: 357px; top: 22px; width: 178px; height: 101px; background: #aaffaa; }
.mon.large span { font-size: 13.9px; padding: 0 9px 3px 0; }
.dock { flex: none; width: 10px; background: #000; padding: 5px 1px 1px; display: flex; flex-direction: column; gap: 2px; }
.dock u { height: 8px; background: #444; }
.dock .last { margin-top: auto; }
.mirror { display: flex; align-items: center; height: 22px; margin: 11px 0 1px 234px; white-space: nowrap; }
.mirror em { letter-spacing: .2px; }
.check { width: 16px; height: 16px; margin-right: 5px; border: 1px solid #a9a6a2; border-radius: 3px; background: linear-gradient(#fff, #f3f2f1); }
.form { display: flex; margin: 12px 0 0 109px; }
.col { width: 272px; display: flex; flex-direction: column; }
.col.right { width: 340px; }
.row { display: flex; align-items: center; height: 31px; margin-top: 7px; white-space: nowrap; }
.row.head { height: 27px; margin: 0; }
.row.rot { margin-top: 9px; }
.row .lab { width: 72px; margin-right: 13px; text-align: right; }
.right .lab { width: 135px; letter-spacing: -.09px; }
.marked { width: 123px; height: 27px; line-height: 26px; background: #ffbcbc; color: #000; margin-right: 13px; letter-spacing: -.02px; }
.switch { width: 72px; height: 21px; padding-left: 7px; border: 1px solid #8a4526; border-radius: 4px; color: #fff; line-height: 19px; font-size: 14px; background: linear-gradient(#fff, #e9e8e7) 37px 0/34px 100% no-repeat, linear-gradient(#e0602e, #f07845); }
.combo { position: relative; height: 31px; line-height: 28px; padding-left: 8px; border: 1px solid #b4b1ad; border-bottom-color: #8f8c88; border-radius: 4px; background: linear-gradient(#fff, #ebeae9); }
.combo::before { content: ""; position: absolute; right: 23px; top: 4px; bottom: 5px; width: 1px; background: #d2d0cd; }
.combo::after { content: ""; position: absolute; right: 9px; top: 12px; border: 5px solid transparent; border-top: 6px solid #444; border-bottom: 0; }
.w162 { width: 162px; letter-spacing: -.1px; } .w179 { width: 179px; } .w265 { width: 265px; margin-left: 1px; }
.combo.mid { padding: 0 25px 0 0; text-align: center; }
.combo.w179 { padding-right: 27px; }
.combo.w265 { padding: 0 26px 0 37px; text-align: left; letter-spacing: .05px; }
.col p { height: 22px; margin-top: 5px; line-height: 22px; white-space: nowrap; letter-spacing: -.02px; }
.row.big-combo { margin-top: 9px; }
.slider { width: 189px; height: 4px; margin-top: 16px; border-radius: 2px; background: linear-gradient(90deg, #dd5f2e 147px, #c9c7c4 147px); box-shadow: inset 0 1px rgba(90,40,20,.35); }
.knob { width: 12px; height: 16px; margin: -6px 0 0 141px; background: #f6f5f4; border: 1px solid #908d89; border-radius: 3px 3px 7px 7px; }
.col output { width: 295px; text-align: center; line-height: 20px; margin-top: 9px; }
.dlg-foot { display: flex; justify-content: space-between; margin: auto 1px 0; }
.btn { width: 124px; height: 27px; line-height: 25px; text-align: center; border: 1px solid #b4b1ad; border-bottom-color: #8f8c88; border-radius: 4px; background: linear-gradient(#fff, #ebeae9); white-space: nowrap; }

/* VirtualBox frame pieces */
.status { display: flex; align-items: center; gap: 5.100px; height: 22px; margin: 66px 0 0 631px; }
.status svg { flex: none; width: 17px; height: 17px; }
.status span { margin-left: 0; font: 11.1px/16px "Noto Sans", sans-serif; color: #000; white-space: nowrap; }
.status.wide { margin: 0; padding-left: 1640px; gap: 4px; background: #f0f0f0; }
.status.wide span { margin-left: -1px; }
.second { flex: 1; min-width: 0; height: 1080px; overflow: hidden; background: #f0f0f0; }
.view { display: flex; height: 959px; }
.vscroll { flex: 1; padding-top: 18px; background: #f0f0f0; }
.vscroll div { height: 820px; margin-left: 1px; border: 1px solid #999; border-right: 0; border-radius: 2px 0 0 2px; background: #ececec; }
.hscroll { display: flex; align-items: center; height: 16px; padding: 0 5px; background: #f3f3f3; }
.hscroll b { border: 4px solid transparent; }
.hscroll .la { border-right-color: #333; margin-left: -4px; } .hscroll .ra { border-left-color: #333; margin-left: 23px; }
.thumb { display: flex; align-items: center; justify-content: center; width: 1849px; height: 15px; margin-left: 7px; border: 1px solid #979797; border-radius: 2px; background: linear-gradient(#f6f6f6, #e3e3e3 48%, #cdcdd0 50%, #d8d8da); }
.thumb s { width: 8px; height: 7px; background: repeating-linear-gradient(90deg, #555 0 1px, transparent 1px 3px); }

.taskbar { display: flex; height: 39px; border-top: 1px solid #15191e; background: linear-gradient(#a3b2c4 0 1px, #8497ad 2px, #8093a9); color: #fff; font: 12px/36px "Open Sans", sans-serif; letter-spacing: -.22px; white-space: nowrap; }
.pin { display: flex; align-items: center; justify-content: center; width: 58px; }
.pin svg { width: 30px; height: 30px; }
.pin.start { width: 49px; } .pin.start svg { width: 37px; height: 37px; }
.pin.ie { width: 67px; } .pin.ie svg { width: 33px; height: 33px; }
.pin.wmp { width: 60px; }
.task { position: relative; display: flex; width: 113px; padding: 2px 0 0 8px; border: 1px solid #3d4a59; border-bottom: 0; border-radius: 2px; box-shadow: inset 1px 1px rgba(255,255,255,.55); background: linear-gradient(160deg, #b4c0cf, #9dacbe 48%, #8b9bb0 52%, #92a2b6); }
.task svg { flex: none; width: 32px; height: 33px; margin-right: 2px; }
.fox svg { transform: scale(1.13); }
.task.g { margin-right: 3.300px; }
.task.j { width: 114px; }
.task small { position: absolute; left: 8px; top: 2px; width: 15px; color: #000; font: 9px/12px "Liberation Sans", sans-serif; text-align: center; }
.task.alert { background: radial-gradient(ellipse at 40% 100%, #f8625a, #d67274 60%, #cf8488); }
.lang { width: 45px; padding-left: 14px; line-height: 35px; color: #eef2f6; }
.sys { width: 110px; height: 24px; margin-top: 8px; }
.clock { display: flex; flex-direction: column; width: 78px; padding: 2px 0 0 7px; line-height: 17px; text-align: center; letter-spacing: -.4px; }
.peek { flex: 1; border-left: 1px solid #3d4a59; background: linear-gradient(#93a4b8, #5d6c80); }
```
